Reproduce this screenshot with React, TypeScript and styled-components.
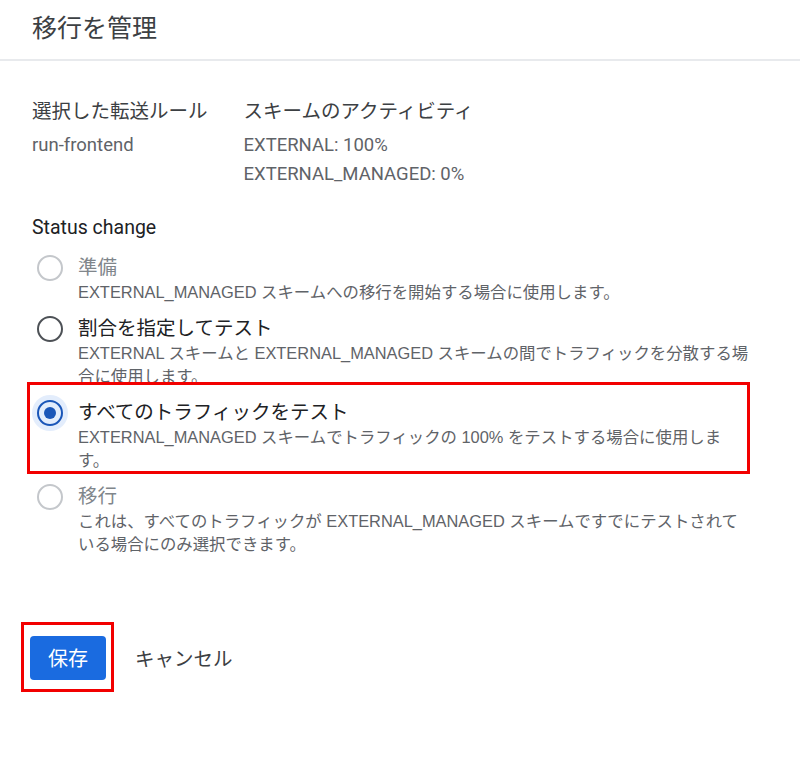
import React, { useState } from 'react'
import styled, { createGlobalStyle } from 'styled-components'

const GlobalStyle = createGlobalStyle`
  body {
    margin: 0;
    background: #ffffff;
    font-family: Roboto, "Noto Sans CJK JP", "Noto Sans", sans-serif;
  }
`

type Option = {
  id: string
  label: string
  desc: string[]
  disabled?: boolean
}

// description lines are kept as they wrap in the dialog
const options: Option[] = [
  {
    id: 'prepare',
    label: '準備',
    desc: ['EXTERNAL_MANAGED スキームへの移行を開始する場合に使用します。'],
    disabled: true,
  },
  {
    id: 'partial',
    label: '割合を指定してテスト',
    desc: [
      'EXTERNAL スキームと EXTERNAL_MANAGED スキームの間でトラフィックを分散する場',
      '合に使用します。',
    ],
  },
  {
    id: 'all',
    label: 'すべてのトラフィックをテスト',
    desc: [
      'EXTERNAL_MANAGED スキームでトラフィックの 100% をテストする場合に使用しま',
      'す。',
    ],
  },
  {
    id: 'migrate',
    label: '移行',
    desc: [
      'これは、すべてのトラフィックが EXTERNAL_MANAGED スキームですでにテストされて',
      'いる場合にのみ選択できます。',
    ],
    disabled: true,
  },
]

const App = () => {
  const [selected, setSelected] = useState('all')

  return (
    <Page>
      <GlobalStyle />
      <Header>
        <Title>移行を管理</Title>
      </Header>
      <Body>
        <InfoGrid>
          <InfoCol>
            <InfoLabel>選択した転送ルール</InfoLabel>
            <InfoValue>run-frontend</InfoValue>
          </InfoCol>
          <InfoCol>
            <InfoLabel>スキームのアクティビティ</InfoLabel>
            <InfoValue>EXTERNAL: 100%</InfoValue>
            <InfoValue>EXTERNAL_MANAGED: 0%</InfoValue>
          </InfoCol>
        </InfoGrid>

        <SectionTitle>Status change</SectionTitle>
        <RadioList>
          {options.map((o) => (
            <RadioRow
              key={o.id}
              $highlight={o.id === 'all'}
              onClick={() => !o.disabled && setSelected(o.id)}
            >
              <RadioWrap $checked={selected === o.id}>
                <RadioCircle $checked={selected === o.id} $disabled={!!o.disabled} />
              </RadioWrap>
              <RadioText>
                <RadioLabel $disabled={!!o.disabled}>{o.label}</RadioLabel>
                {o.desc.map((line) => (
                  <RadioDesc key={line}>{line}</RadioDesc>
                ))}
              </RadioText>
            </RadioRow>
          ))}
        </RadioList>

        <Actions>
          <SaveMark>
            <SaveButton>保存</SaveButton>
          </SaveMark>
          <CancelButton>キャンセル</CancelButton>
        </Actions>
      </Body>
    </Page>
  )
}

export default App

const Page = styled.div`
  width: 800px;
  height: 770px;
  background: #fff;
  color: #202124;
`

const Header = styled.div`
  height: 61px;
  border-bottom: 2px solid #e8eaed;
  display: flex;
  align-items: center;
  padding-left: 32px;
  box-sizing: border-box;
`

const Title = styled.h1`
  margin: -7px 0 0 0;
  font-size: 25px;
  font-weight: 400;
  color: #3c4043;
`

const Body = styled.div`
  padding: 37px 32px 0 32px;
`

const InfoGrid = styled.div`
  display: flex;
  gap: 36px;
`

const InfoCol = styled.div`
  display: flex;
  flex-direction: column;
`

const InfoLabel = styled.div`
  font-size: 19.5px;
  line-height: 28px;
  color: #3c4043;
  margin-bottom: 5px;
`

const InfoValue = styled.div`
  font-size: 18.5px;
  line-height: 29px;
  color: #5f6368;
`

const SectionTitle = styled.div`
  font-size: 19.5px;
  line-height: 26px;
  color: #202124;
  margin-top: 26px;
`

const RadioList = styled.div`
  display: flex;
  flex-direction: column;
  gap: 11px;
  margin-top: 14px;
`

const RadioRow = styled.div<{ $highlight: boolean }>`
  position: relative;
  display: flex;
  align-items: flex-start;
  gap: 10px;
  cursor: pointer;

  &::after {
    content: '';
    display: ${(p) => (p.$highlight ? 'block' : 'none')};
    position: absolute;
    left: -5px;
    top: -18px;
    width: 723px;
    height: 92px;
    box-sizing: border-box;
    border: 3px solid #f20000;
    pointer-events: none;
  }
`

const RadioWrap = styled.div<{ $checked: boolean }>`
  width: 36px;
  height: 36px;
  margin-top: -5px;
  flex: none;
  border-radius: 50%;
  display: flex;
  align-items: center;
  justify-content: center;
  background: ${(p) => (p.$checked ? '#e3edfc' : 'transparent')};
`

const RadioCircle = styled.div<{ $checked: boolean; $disabled: boolean }>`
  width: 26px;
  height: 26px;
  box-sizing: border-box;
  border-radius: 50%;
  border: 2px solid
    ${(p) => (p.$checked ? '#1a56b8' : p.$disabled ? '#c4c7cb' : '#4d5156')};
  display: flex;
  align-items: center;
  justify-content: center;

  &::after {
    content: '';
    width: 12px;
    height: 12px;
    border-radius: 50%;
    background: #1a56b8;
    display: ${(p) => (p.$checked ? 'block' : 'none')};
  }
`

const RadioText = styled.div`
  display: flex;
  flex-direction: column;
`

const RadioLabel = styled.div<{ $disabled: boolean }>`
  font-size: 19.5px;
  line-height: 26px;
  color: ${(p) => (p.$disabled ? '#80868b' : '#202124')};
`

const RadioDesc = styled.div`
  font-family: "Liberation Sans", "Noto Sans CJK JP", sans-serif;
  font-size: 16.4px;
  line-height: 23.5px;
  color: #5f6368;
  white-space: nowrap;
`

const Actions = styled.div`
  display: flex;
  align-items: center;
  gap: 29px;
  margin-top: 79px;
  margin-left: -2px;
`

const SaveMark = styled.div`
  position: relative;
  display: flex;

  &::after {
    content: '';
    position: absolute;
    left: -9px;
    top: -14px;
    width: 93px;
    height: 70px;
    box-sizing: border-box;
    border: 3px solid #f20000;
    pointer-events: none;
  }
`

const SaveButton = styled.button`
  width: 76px;
  height: 44px;
  border: 0;
  border-radius: 4px;
  background: #1a6be0;
  color: #fff;
  font-family: inherit;
  font-size: 20px;
  padding: 0;
`

const CancelButton = styled.button`
  border: 0;
  background: transparent;
  color: #3c4043;
  font-family: inherit;
  font-size: 19.5px;
  padding: 0;
`
